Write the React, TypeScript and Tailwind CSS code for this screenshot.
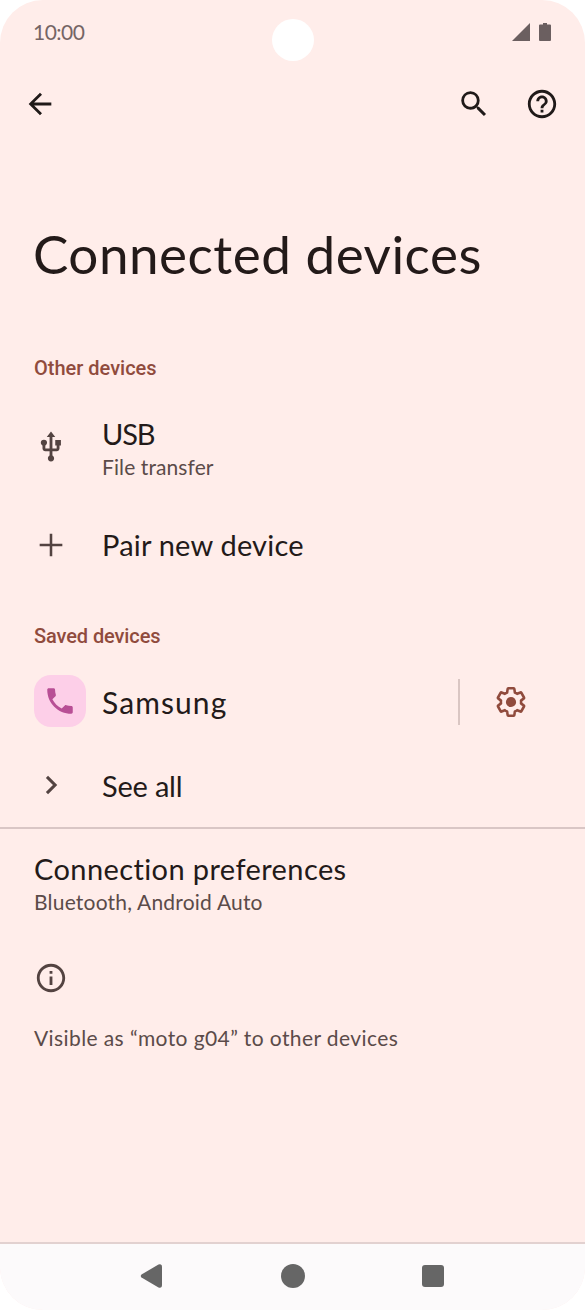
import type { ReactNode } from "react";

function Icon({ children, className = "" }: { children: ReactNode; className?: string }) {
  return (
    <svg viewBox="0 0 24 24" fill="currentColor" className={`h-[34px] w-[34px] shrink-0 ${className}`}>
      {children}
    </svg>
  );
}

const gear =
  "M19.43 12.98c.04-.32.07-.64.07-.98 0-.34-.03-.66-.07-.98l2.11-1.65c.19-.15.24-.42.12-.64l-2-3.46c-.09-.16-.26-.25-.44-.25-.06 0-.12.01-.17.03l-2.49 1c-.52-.4-1.08-.73-1.69-.98l-.38-2.65C14.46 2.18 14.25 2 14 2h-4c-.25 0-.46.18-.49.42l-.38 2.65c-.61.25-1.17.59-1.69.98l-2.49-1c-.06-.02-.12-.03-.18-.03-.17 0-.34.09-.43.25l-2 3.46c-.13.22-.07.49.12.64l2.11 1.65c-.04.32-.07.65-.07.98 0 .33.03.66.07.98l-2.11 1.65c-.19.15-.24.42-.12.64l2 3.46c.09.16.26.25.44.25.06 0 .12-.01.17-.03l2.49-1c.52.4 1.08.73 1.69.98l.38 2.65c.03.24.24.42.49.42h4c.25 0 .46-.18.49-.42l.38-2.65c.61-.25 1.17-.59 1.69-.98l2.49 1c.06.02.12.03.18.03.17 0 .34-.09.43-.25l2-3.46c.12-.22.07-.49-.12-.64z";

function StatusBar() {
  return (
    <div className="relative flex h-[65px] items-center justify-between pr-[34px] pb-[2px] pl-[33px] text-[#756565]">
      <span className="text-[21px] tracking-[-0.5px]">10:00</span>
      <div className="absolute top-[19px] left-[271.5px] h-[42px] w-[42px] rounded-full bg-white" />
      <div className="flex items-center gap-[9px] text-[#6b5f60]">
        <svg viewBox="0 0 18 18" className="h-[18px] w-[18px]" fill="currentColor">
          <path d="M18 0v18H0z" />
        </svg>
        <svg viewBox="0 0 12 18" className="h-[18px] w-[12px]" fill="currentColor">
          <path d="M4 0h4v1.5h3a1 1 0 0 1 1 1V17a1 1 0 0 1-1 1H1a1 1 0 0 1-1-1V2.500a1 1 0 0 1 1-1h3z" />
        </svg>
      </div>
    </div>
  );
}

function Toolbar() {
  return (
    <header className="flex h-[78px] items-center pr-[26px] pl-[23px] text-[#201a19]">
      <Icon>
        <path d="M20 11H7.830l5.590-5.590L12 4l-8 8 8 8 1.410-1.410L7.830 13H20z" />
      </Icon>
      <Icon className="ml-auto">
        <path d="M15.500 14h-.79l-.28-.27A6.471 6.471 0 0 0 16 9.500 6.500 6.500 0 1 0 9.500 16c1.610 0 3.090-.59 4.230-1.570l.27.28v.79l5 4.990L20.490 19zm-6 0C7.010 14 5 11.990 5 9.500S7.010 5 9.500 5 14 7.010 14 9.500 11.990 14 9.500 14z" />
      </Icon>
      <Icon className="ml-[34px]">
        <path d="M11 18h2v-2h-2zm1-16C6.480 2 2 6.480 2 12s4.480 10 10 10 10-4.480 10-10S17.520 2 12 2m0 18c-4.410 0-8-3.590-8-8s3.590-8 8-8 8 3.590 8 8-3.590 8-8 8m0-14c-2.210 0-4 1.790-4 4h2c0-1.100.9-2 2-2s2 .9 2 2c0 2-3 1.750-3 5h2c0-2.250 3-2.500 3-5 0-2.210-1.790-4-4-4" />
      </Icon>
    </header>
  );
}

export default function App() {
  return (
    <div className="h-[1310px] w-[585px] bg-white">
      <div className="flex h-full flex-col overflow-hidden rounded-[43px] bg-[#ffedea] font-['Lato',sans-serif] text-[#231a19]">
        <StatusBar />
        <Toolbar />
        <h1 className="h-[213px] pt-[79px] pl-[33px] text-[53px] leading-[64px] tracking-[0.5px] whitespace-nowrap">
          Connected devices
        </h1>

        <h2 className="pl-[34px] font-['Roboto',sans-serif] text-[20px] leading-[24px] font-medium text-[#904b3d]">
          Other devices
        </h2>
        <div className="mt-[34px] flex h-[70px] pl-[34px]">
          <Icon className="mt-[16px] text-[#534341]">
            <path d="M15 7v4h1v2h-3V5h2l-3-4-3 4h2v8H8v-2.070c.7-.37 1.200-1.080 1.200-1.930A2.200 2.200 0 0 0 4.800 9c0 .85.5 1.560 1.200 1.930V13c0 1.110.89 2 2 2h3v3.050c-.71.37-1.200 1.100-1.200 1.950a2.200 2.200 0 0 0 4.400 0c0-.85-.49-1.580-1.200-1.950V15h3c1.110 0 2-.89 2-2v-2h1V7z" />
          </Icon>
          <div className="ml-[34px] pt-[3px]">
            <div className="text-[29px] leading-[34px] tracking-[-1.2px]">USB</div>
            <div className="text-[21px] leading-[32px] tracking-[0.1px] text-[#5b4b49]">File transfer</div>
          </div>
        </div>
        <div className="mt-[33px] flex h-[56px] items-center pl-[34px]">
          <Icon className="text-[#534341]">
            <path d="M11.100 4h1.800v7.100H20v1.800h-7.100V20h-1.800v-7.100H4v-1.800h7.100z" />
          </Icon>
          <div className="ml-[34px] text-[29px] tracking-[0.2px]">Pair new device</div>
        </div>

        <h2 className="mt-[51px] pl-[34px] font-['Roboto',sans-serif] text-[20px] leading-[24px] font-medium tracking-[-0.1px] text-[#904b3d]">
          Saved devices
        </h2>
        <div className="mt-[27px] flex h-[52px] items-center pl-[34px]">
          <div className="flex h-[52px] w-[52px] items-center justify-center rounded-[17px] bg-[#fdcfe8] text-[#b84f95]">
            <Icon>
              <path d="M6.620 10.790c1.440 2.830 3.760 5.140 6.590 6.590l2.200-2.200c.27-.27.67-.36 1.020-.24 1.120.37 2.330.57 3.570.57.55 0 1 .45 1 1V20c0 .55-.45 1-1 1-9.390 0-17-7.610-17-17 0-.55.45-1 1-1h3.500c.55 0 1 .45 1 1 0 1.250.2 2.450.57 3.570.11.35.03.74-.25 1.020z" />
            </Icon>
          </div>
          <div className="ml-[16px] pt-[2px] text-[30px] tracking-[1.1px]">Samsung</div>
          <div className="mt-[1px] ml-auto h-[46px] w-[2px] bg-[#dac6c3]" />
          <Icon className="mt-[2px] mr-[57px] ml-[34px] text-[#904b3d]">
            <g transform="translate(12 12) scale(.95 .97) translate(-12 -12)">
              <path d={gear} fill="none" stroke="currentColor" strokeWidth="1.9" strokeLinejoin="round" />
            </g>
            <circle cx="12" cy="12" r="3.600" />
          </Icon>
        </div>
        <div className="mt-[30px] flex h-[56px] items-center pl-[34px]">
          <Icon className="text-[#534341]">
            <path d="M9.900 5.500 8.400 7l5 5-5 5 1.500 1.500 6.500-6.500z" />
          </Icon>
          <div className="ml-[34px] pt-[1px] text-[29px] tracking-[-0.2px]">See all</div>
        </div>

        <div className="mt-[14px] h-[2px] shrink-0 bg-[#d9c6c5]" />
        <div className="mt-[23px] pl-[34px]">
          <div className="text-[29px] leading-[34px] tracking-[0.4px]">Connection preferences</div>
          <div className="text-[21px] leading-[32px] tracking-[0.2px] text-[#5b4b49]">Bluetooth, Android Auto</div>
        </div>
        <div className="mt-[43px] pl-[34px]">
          <Icon className="text-[#534341]">
            <path d="M11 7h2v2h-2zm0 4h2v6h-2zm1-9C6.480 2 2 6.480 2 12s4.480 10 10 10 10-4.480 10-10S17.520 2 12 2m0 18c-4.410 0-8-3.590-8-8s3.590-8 8-8 8 3.590 8 8-3.590 8-8 8" />
          </Icon>
        </div>
        <p className="mt-[28px] pl-[34px] text-[21px] leading-[30px] tracking-[0.4px] text-[#5b4b49]">
          Visible as “moto g04” to other devices
        </p>

        <nav className="mt-auto flex h-[68px] shrink-0 items-center border-t-2 border-[#e2d1d0] bg-[#fcfafb] pb-[2px] pl-[140px] text-[#666]">
          <svg viewBox="0 0 22 24" className="h-[24px] w-[22px]" fill="currentColor">
            <path d="M1.500 10.500 18.500.5Q22-.5 22 3V21Q22 24.500 18.500 23.500L1.500 13.500Q0 12 1.500 10.500z" />
          </svg>
          <div className="ml-[119px] h-[24px] w-[24px] rounded-full bg-[#666]" />
          <div className="ml-[117px] h-[22px] w-[22px] rounded-[3px] bg-[#666]" />
        </nav>
      </div>
    </div>
  );
}
